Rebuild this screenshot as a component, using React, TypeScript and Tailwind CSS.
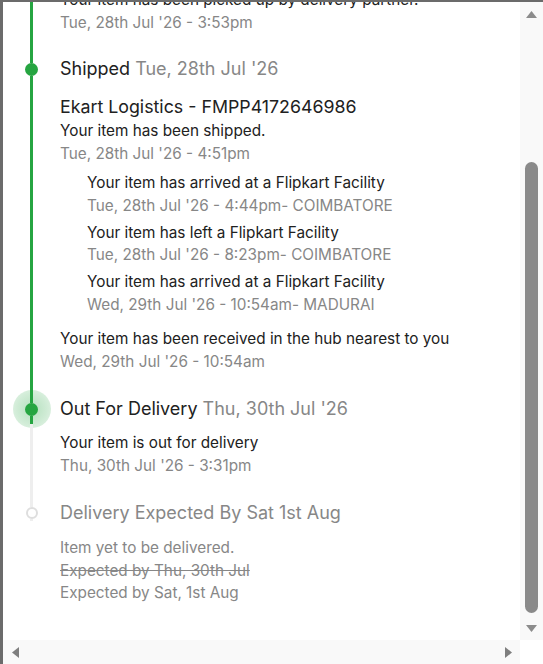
import React from 'react';

function UpArrow() {
  return (
    <svg width="11" height="7" viewBox="0 0 11 7"><polygon points="5.5,0 11,7 0,7" fill="#8c8c8c" /></svg>
  );
}
function DownArrow() {
  return (
    <svg width="11" height="7" viewBox="0 0 11 7"><polygon points="0,0 11,0 5.5,7" fill="#8c8c8c" /></svg>
  );
}
function LeftArrow() {
  return (
    <svg width="7" height="11" viewBox="0 0 7 11"><polygon points="7,0 7,11 0,5.5" fill="#7f7f7f" /></svg>
  );
}
function RightArrow() {
  return (
    <svg width="7" height="11" viewBox="0 0 7 11"><polygon points="0,0 7,5.5 0,11" fill="#7f7f7f" /></svg>
  );
}

function SubEvent({ title, date }: { title: string; date: string }) {
  return (
    <div>
      <div>{title}</div>
      <div className="text-[#878787]">{date}</div>
    </div>
  );
}

export default function App() {
  return (
    <div className="w-[543px] h-[664px] bg-white border-l-[3px] border-t-[2px] border-[#6b6b6b] flex flex-col overflow-hidden font-[family-name:Inter,sans-serif] text-[#212121]">
      <div className="flex flex-1 min-h-0">
        <div className="flex-1 overflow-hidden">
          <div className="-mt-[13px] isolate">
            {/* previous step (picked up) */}
            <div className="flex">
              <div className="w-[57px] shrink-0 flex flex-col items-center">
                <div className="w-[3px] flex-1 bg-[#26a541]" />
              </div>
              <div className="flex-1 pb-[22px] text-[15.3px] leading-[22.5px]">
                <div>Your item has been picked up by delivery partner.</div>
                <div className="text-[#878787]">Tue, 28th Jul '26 - 3:53pm</div>
              </div>
            </div>

            {/* Shipped */}
            <div className="flex">
              <div className="w-[57px] shrink-0 flex flex-col items-center">
                <div className="w-[3px] h-[6.5px] bg-[#26a541]" />
                <div className="w-[13px] h-[13px] rounded-full bg-[#26a541]" />
                <div className="w-[3px] flex-1 bg-[#26a541]" />
              </div>
              <div className="flex-1 pb-[23px]">
                <div className="text-[18px] leading-[26px]">
                  Shipped <span className="text-[#878787]">Tue, 28th Jul '26</span>
                </div>
                <div className="mt-[11px] text-[17.8px] leading-[27px]">Ekart Logistics - FMPP4172646986</div>
                <div className="text-[15.3px] leading-[22.5px]">
                  <div>Your item has been shipped.</div>
                  <div className="text-[#878787]">Tue, 28th Jul '26 - 4:51pm</div>
                  <div className="mt-[7px] pl-[27px] flex flex-col gap-[4.5px]">
                    <SubEvent title="Your item has arrived at a Flipkart Facility" date="Tue, 28th Jul '26 - 4:44pm- COIMBATORE" />
                    <SubEvent title="Your item has left a Flipkart Facility" date="Tue, 28th Jul '26 - 8:23pm- COIMBATORE" />
                    <SubEvent title="Your item has arrived at a Flipkart Facility" date="Wed, 29th Jul '26 - 10:54am- MADURAI" />
                  </div>
                  <div className="mt-[12px]">Your item has been received in the hub nearest to you</div>
                  <div className="text-[#878787]">Wed, 29th Jul '26 - 10:54am</div>
                </div>
              </div>
            </div>

            {/* Out For Delivery */}
            <div className="flex">
              <div className="w-[57px] shrink-0 flex flex-col items-center">
                <div className="w-[3px] h-[6.5px] bg-[#26a541]" />
                <div className="relative w-[13px] h-[13px]">
                  <div className="absolute -inset-[12.5px] rounded-full -z-10 bg-[radial-gradient(circle,rgba(38,165,65,0.34)_0%,rgba(38,165,65,0.22)_55%,rgba(38,165,65,0.1)_100%)]" />
                  <div className="w-[13px] h-[13px] rounded-full bg-[#26a541]" />
                </div>
                <div className="w-[3px] h-[8.5px] bg-[#26a541]" />
                <div className="w-[3px] flex-1 bg-[#eeeeee]" />
              </div>
              <div className="flex-1 pb-[23px]">
                <div className="text-[18px] leading-[26px]">
                  Out For Delivery <span className="text-[#878787]">Thu, 30th Jul '26</span>
                </div>
                <div className="mt-[10px] text-[15.3px] leading-[22.5px]">
                  <div>Your item is out for delivery</div>
                  <div className="text-[#878787]">Thu, 30th Jul '26 - 3:31pm</div>
                </div>
              </div>
            </div>

            {/* Delivery Expected */}
            <div className="flex">
              <div className="w-[57px] shrink-0 flex flex-col items-center">
                <div className="w-[3px] h-[7px] bg-[#eeeeee]" />
                <div className="w-[12px] h-[12px] rounded-full border-2 border-[#dedede] bg-white" />
                <div className="w-[3px] h-[2px] bg-[#eeeeee]" />
              </div>
              <div className="flex-1 pb-[23px] text-[#878787]">
                <div className="text-[18px] leading-[26px]">Delivery Expected By Sat 1st Aug</div>
                <div className="mt-[11px] text-[15.3px] leading-[22.5px]">
                  <div>Item yet to be delivered.</div>
                  <div className="line-through">Expected by Thu, 30th Jul</div>
                  <div>Expected by Sat, 1st Aug</div>
                </div>
              </div>
            </div>
          </div>
        </div>

        {/* vertical scrollbar */}
        <div className="w-[23px] shrink-0 bg-[#f9f9f9] flex flex-col items-center">
          <div className="h-[24px] w-full flex items-center justify-center"><UpArrow /></div>
          <div className="h-[136px]" />
          <div className="w-[13px] h-[451px] rounded-full bg-[#8a8a8a]" />
          <div className="flex-1" />
          <div className="h-[24px] w-full flex items-center justify-center"><DownArrow /></div>
        </div>
      </div>

      {/* horizontal scrollbar */}
      <div className="h-[24px] shrink-0 flex">
        <div className="flex-1 bg-[#f9f9f9] flex items-center justify-between">
          <div className="w-[24px] h-full flex items-center justify-center"><LeftArrow /></div>
          <div className="w-[24px] h-full flex items-center justify-center"><RightArrow /></div>
        </div>
        <div className="w-[23px] bg-white" />
      </div>
    </div>
  );
}
